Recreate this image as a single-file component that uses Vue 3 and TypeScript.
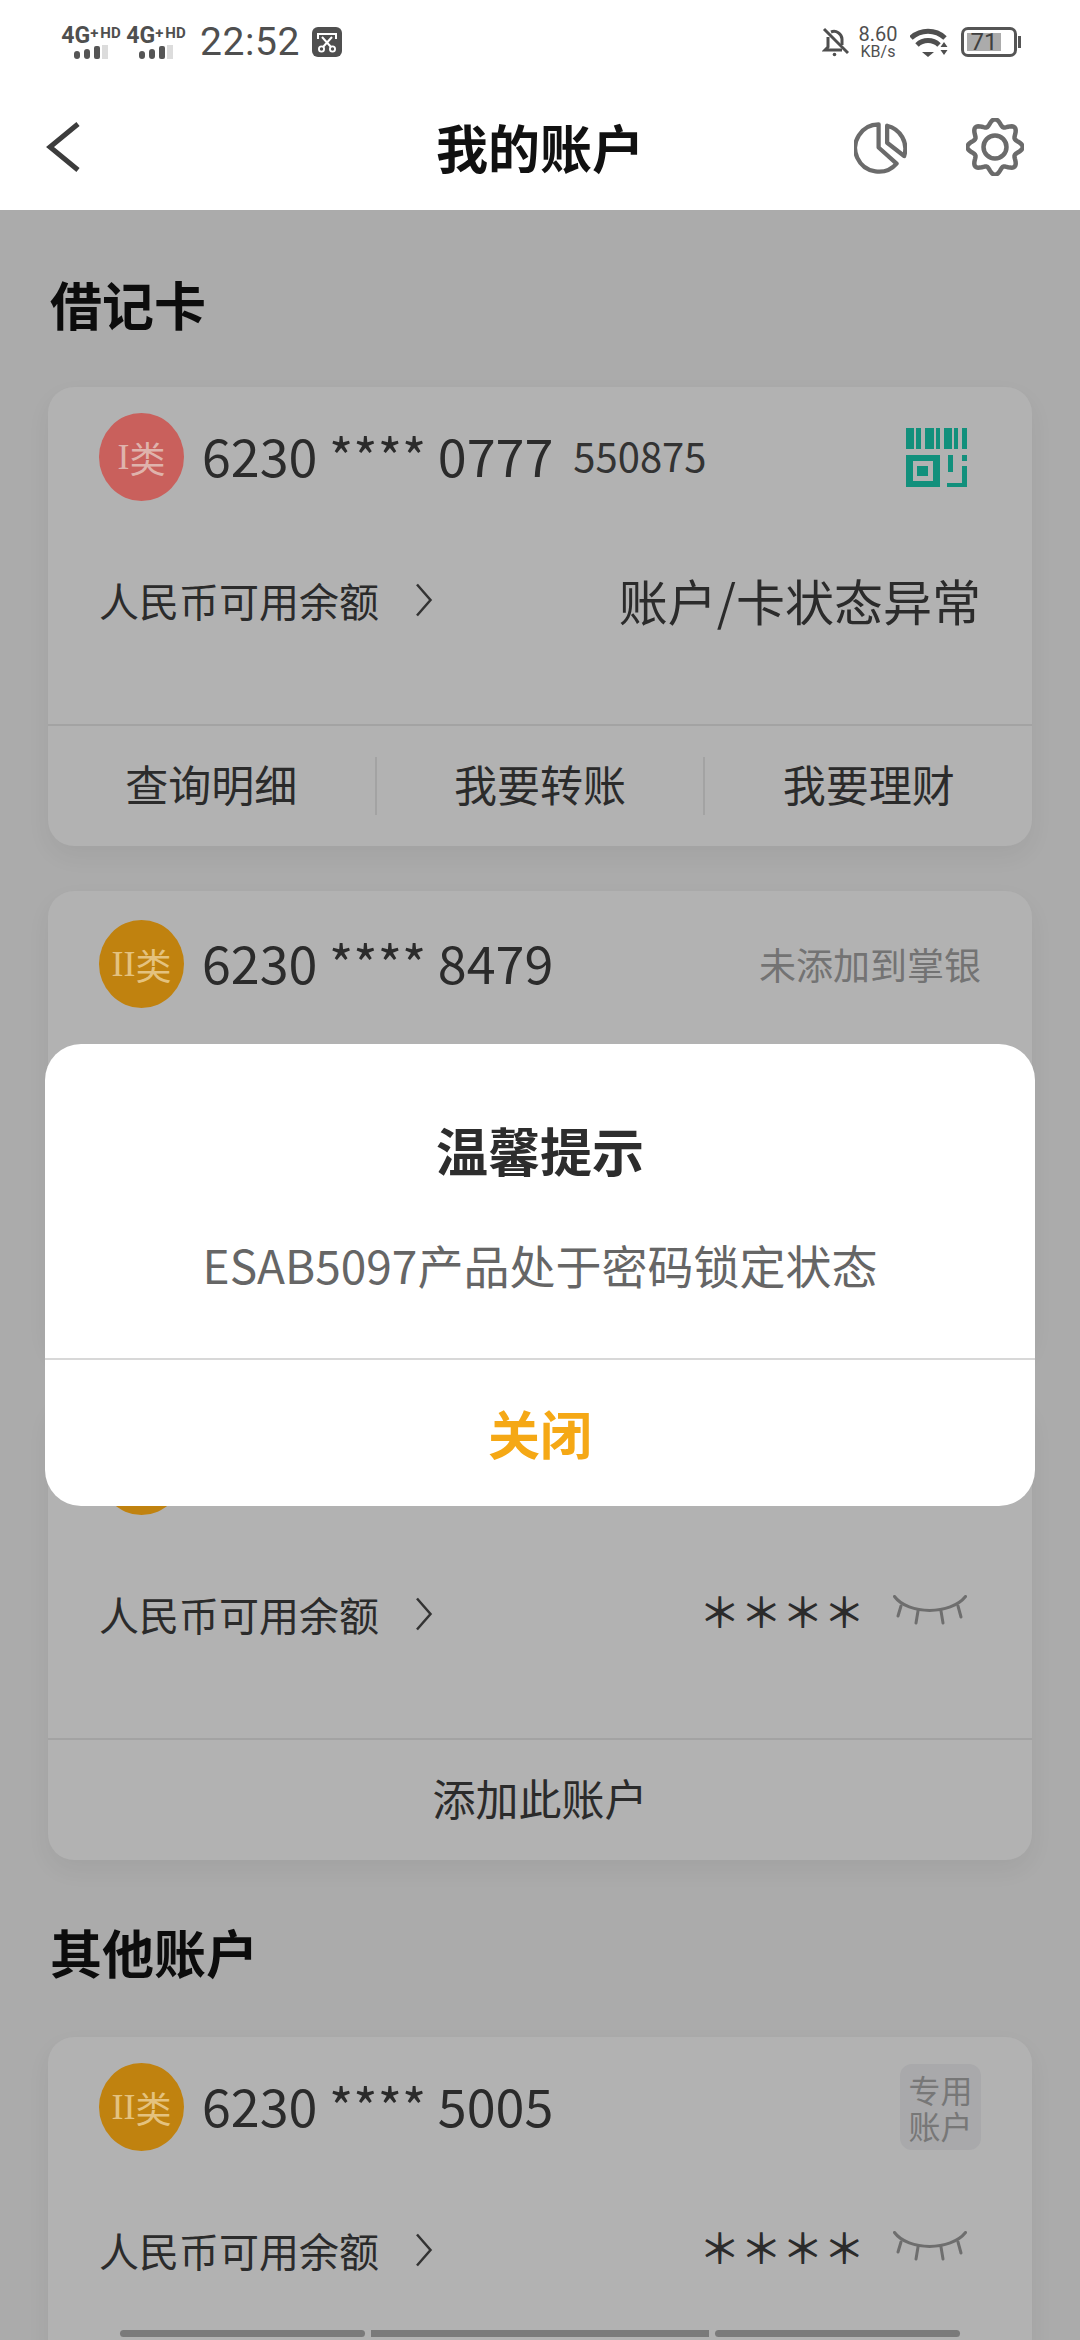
<template>
  <div class="page">
    <div class="status-bar">
      <div class="status-left">
        <div v-for="n in 2" :key="n" class="net">
          <div class="net-label">4G<sup>+</sup><span class="hd">HD</span></div>
          <svg class="net-bars" width="34" height="14" viewBox="0 0 34 14">
            <rect x="0" y="6" width="6" height="8" rx="3" fill="#555" />
            <rect x="10" y="4" width="6" height="10" rx="3" fill="#555" />
            <rect x="20" y="1" width="6" height="13" rx="2" fill="#555" />
            <rect x="28" y="0" width="6" height="14" fill="#dcdcdc" />
          </svg>
        </div>
        <span class="time">22:52</span>
        <svg class="cut-icon" width="30" height="30" viewBox="0 0 30 30">
          <rect width="30" height="30" rx="6" fill="#4f4f4f" />
          <path d="M6 12V7h18v5M10 10l9 10M20 10l-9 10" fill="none" stroke="#fff" stroke-width="2" />
          <circle cx="9.5" cy="22" r="2.6" fill="none" stroke="#fff" stroke-width="1.8" />
          <circle cx="20.5" cy="22" r="2.6" fill="none" stroke="#fff" stroke-width="1.8" />
        </svg>
      </div>
      <div class="status-right">
        <svg class="bell" width="27" height="30" viewBox="0 0 27 30" fill="none" stroke="#4f4f4f" stroke-width="3">
          <path d="M6 10v10l-3 3h17M9 5a8 8 0 0 1 11 7v6" />
          <path d="M2 2l24 24" />
          <circle cx="12.5" cy="27.5" r="1.8" fill="#4f4f4f" stroke="none" />
        </svg>
        <div class="speed">
          <span class="speed-num">8.60</span>
          <span class="speed-unit">KB/s</span>
        </div>
        <svg class="wifi" width="38" height="29" viewBox="0 0 38 29" fill="none" stroke="#4f4f4f" stroke-width="5">
          <path d="M1 10A25 25 0 0 1 35 10" />
          <path d="M7 17A16 16 0 0 1 29 17" />
          <path d="M12 24h12l-6 5z" fill="#4f4f4f" stroke="none" />
          <path d="M30.500 19h7l-3.500-5zM30.500 22h7l-3.500 5z" fill="#4f4f4f" stroke="none" />
        </svg>
        <div class="battery">
          <div class="battery-body">
            <div class="battery-fill">71</div>
          </div>
          <div class="battery-nib"></div>
        </div>
      </div>
    </div>

    <header class="nav">
      <svg class="back" width="34" height="50" viewBox="0 0 34 50" fill="none" stroke="#3c3c3c" stroke-width="5">
        <path d="M32 2L4 25l28 23" />
      </svg>
      <h1 class="nav-title">我的账户</h1>
      <div class="nav-actions">
        <svg width="53" height="53" viewBox="0 0 56 56" fill="none" stroke="#6b6b6b" stroke-width="4.500" stroke-linejoin="round">
          <path d="M26 3.500A25 25 0 1 0 45 45L26 28Z" />
          <path d="M35 5A25 25 0 0 1 53 37L35 23Z" />
        </svg>
        <svg width="58" height="58" viewBox="0 0 58 58" fill="none" stroke="#6b6b6b" stroke-width="4.500">
          <path :d="gearPath" />
          <circle cx="29" cy="29" r="11.500" />
        </svg>
      </div>
    </header>

    <main class="content">
      <section v-for="section in sections" :key="section.title" class="section">
        <h2 class="section-title">{{ section.title }}</h2>
        <div class="card-list">
          <div v-for="card in section.cards" :key="card.id" class="card" :class="{ tall: card.tall }">
            <div class="card-head">
              <span class="badge" :class="card.level === 'I' ? 'badge-red' : 'badge-gold'">
                <span class="badge-num">{{ card.level }}</span>类
              </span>
              <span v-if="card.no" class="card-no">{{ card.no }}</span>
              <span v-if="card.sub" class="card-sub">{{ card.sub }}</span>
              <svg v-if="card.tag === 'qr'" class="qr" width="61" height="59" viewBox="0 0 61 59" fill="#12907c">
                <path d="M0 0h8v21H0zM10 0h5v21h-5zM19 0h9v21h-9zM30 0h4v21h-4zM38 0h8v21h-8zM48 0h4v21h-4zM56 0h5v21h-5z" />
                <path fill-rule="evenodd" d="M0 27h34v32H0zM7 33v20h20V33z" />
                <path d="M11 38h11v10H11zM42 27h5v17h-5zM56 27h5v6h-5zM56 38h5v21H41v-4h15z" />
              </svg>
              <span v-else-if="card.tag === 'special'" class="tag-special">专用<br />账户</span>
              <span v-else-if="card.tag === 'unbound'" class="tag-unbound">未添加到掌银</span>
            </div>
            <div v-if="!card.covered" class="card-balance">
              <div class="balance-label">
                <span>人民币可用余额</span>
                <svg width="18" height="34" viewBox="0 0 18 34" fill="none" stroke="#333" stroke-width="2.500">
                  <path d="M2 1.500L15.500 17 2 32.500" />
                </svg>
              </div>
              <div v-if="card.status" class="balance-status">{{ card.status }}</div>
              <div v-else class="balance-hidden">
                <span class="stars">＊＊＊＊</span>
                <svg class="eye" width="74" height="30" viewBox="0 0 74 30" fill="none" stroke="#6e6e6e" stroke-width="3" stroke-linecap="round">
                  <path d="M1.500 1.500C15 20 58 20 72.500 1.500" />
                  <path d="M8 11L5 21M25 16l-2 12M48 16l2 12M65 11l3 11" />
                </svg>
              </div>
            </div>
            <div v-if="card.actions.length" class="card-actions">
              <div v-for="action in card.actions" :key="action" class="action">{{ action }}</div>
            </div>
          </div>
        </div>
      </section>
    </main>

    <div class="home-bar">
      <span class="home-seg seg-a"></span>
      <span class="home-seg seg-b"></span>
      <span class="home-seg seg-a"></span>
    </div>

    <div class="dialog">
      <div class="dialog-body">
        <h3 class="dialog-title">温馨提示</h3>
        <p class="dialog-msg">ESAB5097产品处于密码锁定状态</p>
      </div>
      <button class="dialog-btn">关闭</button>
    </div>
  </div>
</template>

<script setup lang="ts">
interface Card {
  id: number;
  level: 'I' | 'II';
  no?: string;
  sub?: string;
  tag?: 'qr' | 'special' | 'unbound';
  status?: string;
  tall?: boolean;
  covered?: boolean; // lower part sits behind the dialog
  actions: string[];
}

const sections: { title: string; cards: Card[] }[] = [
  {
    title: '借记卡',
    cards: [
      {
        id: 1,
        level: 'I',
        no: '6230 **** 0777',
        sub: '550875',
        tag: 'qr',
        status: '账户/卡状态异常',
        actions: ['查询明细', '我要转账', '我要理财']
      },
      { id: 2, level: 'II', no: '6230 **** 8479', tag: 'unbound', tall: true, covered: true, actions: [] },
      { id: 3, level: 'II', tall: true, actions: ['添加此账户'] }
    ]
  },
  {
    title: '其他账户',
    cards: [{ id: 4, level: 'II', no: '6230 **** 5005', tag: 'special', actions: [] }]
  }
];

// scalloped gear outline, 8 lobes
const gearPath = (() => {
  const pts: string[] = [];
  for (let i = 0; i < 120; i++) {
    const a = (i / 120) * Math.PI * 2;
    const r = 24.5 + 3.2 * Math.cos(8 * a);
    const x = 29 + r * Math.sin(a);
    const y = 29 - r * Math.cos(a);
    pts.push(`${x.toFixed(2)} ${y.toFixed(2)}`);
  }
  return `M${pts.join('L')}Z`;
})();
</script>

<style>
body {
  background: #ababab;
}
</style>

<style scoped>
.page {
  position: relative;
  width: 1080px;
  height: 2340px;
  overflow: hidden;
  background: #ababab;
  font-family: "Noto Sans CJK SC", "Noto Sans", sans-serif;
  color: #2b2b2b;
}

.status-bar {
  display: flex;
  align-items: center;
  justify-content: space-between;
  height: 84px;
  padding: 0 59px 0 62px;
  background: #fff;
  color: #4f4f4f;
  font-family: Roboto, sans-serif;
}

.status-left,
.status-right {
  display: flex;
  align-items: center;
}

.net {
  display: flex;
  flex-direction: column;
  align-items: center;
  width: 58px;
  margin-right: 7px;
  padding-top: 1px;
}

.net-label {
  display: flex;
  align-items: flex-start;
  font-size: 23px;
  line-height: 17px;
  font-weight: 700;
  white-space: nowrap;
}

.net-label sup {
  font-size: 15px;
  line-height: 13px;
}

.hd {
  margin-left: 2px;
  font-size: 15px;
  line-height: 13px;
}

.net-bars {
  display: block;
  margin-top: 1px;
}

.time {
  margin-left: 8px;
  font-size: 39px;
  line-height: 44px;
  letter-spacing: 0.6px;
}

.cut-icon {
  margin-left: 12px;
}

.bell {
  margin-right: 10px;
}

.speed {
  display: flex;
  flex-direction: column;
  align-items: center;
  width: 38px;
  margin-right: 13px;
}

.speed-num {
  font-size: 20px;
  line-height: 19px;
}

.speed-unit {
  font-size: 16px;
  line-height: 15px;
}

.wifi {
  margin-right: 13px;
}

.battery {
  display: flex;
  align-items: center;
}

.battery-body {
  width: 56px;
  height: 30px;
  padding: 3px;
  box-sizing: border-box;
  border: 3px solid #555;
  border-radius: 7px;
}

.battery-fill {
  width: 34px;
  height: 100%;
  background: #ababab;
  text-align: center;
  font-size: 24px;
  line-height: 19px;
  color: #3f3f3f;
  white-space: nowrap;
}

.battery-nib {
  width: 3px;
  height: 12px;
  margin-left: 1px;
  background: #555;
}

.nav {
  display: grid;
  grid-template-columns: 1fr auto 1fr;
  align-items: center;
  height: 126px;
  padding: 0 46px;
  background: #fff;
}

.nav-title {
  margin: 0;
  font-size: 52px;
  line-height: 60px;
  font-weight: 700;
  color: #111;
}

.nav-actions {
  display: flex;
  align-items: center;
  justify-content: flex-end;
  gap: 59px;
  padding-right: 10px;
}

.content {
  padding: 64px 48px 0;
}

.section + .section {
  margin-top: 62px;
}

.section-title {
  margin: 0 0 53px 2px;
  font-size: 52px;
  line-height: 60px;
  font-weight: 700;
  color: #0c0c0c;
}

.section + .section .section-title {
  margin-bottom: 55px;
}

.card-list {
  display: flex;
  flex-direction: column;
  gap: 45px;
}

.card {
  min-height: 459px;
  background: #b2b2b2;
  border-radius: 26px;
  box-shadow: 0 10px 24px rgba(0, 0, 0, 0.05);
}

.card.tall {
  min-height: 462px;
}

.card-head {
  display: flex;
  align-items: center;
  height: 88px;
  padding: 26px 51px 0;
  box-sizing: content-box;
}

.card.tall .card-head {
  padding-top: 29px;
}

.badge {
  display: flex;
  align-items: center;
  justify-content: center;
  width: 85px;
  height: 88px;
  margin-right: 18px;
  border-radius: 50%;
  font-size: 36px;
  line-height: 1;
}

.badge-num {
  font-family: "Liberation Serif", serif;
}

.badge-red {
  background: #c9605c;
  color: #dfb3ac;
}

.badge-gold {
  background: #c0820f;
  color: #e4c27f;
}

.card-no {
  margin-bottom: 4px;
  font-size: 52px;
  line-height: 84px;
  color: #2b2b2b;
  white-space: pre;
}

.card-sub {
  margin-bottom: 4px;
  margin-left: 20px;
  font-size: 40px;
  line-height: 84px;
  color: #333;
}

.qr {
  margin-left: auto;
  margin-right: 14px;
}

.tag-special {
  display: block;
  margin-left: auto;
  padding: 7px 4px 0;
  width: 81px;
  height: 86px;
  box-sizing: border-box;
  border-radius: 12px;
  background: #a9a9ab;
  text-align: center;
  font-size: 32px;
  line-height: 36px;
  color: #777;
}

.tag-unbound {
  margin-left: auto;
  font-size: 37px;
  line-height: 88px;
  color: #737373;
}

.card-balance {
  display: flex;
  align-items: center;
  justify-content: space-between;
  height: 60px;
  margin-top: 69px;
  padding: 0 51px;
}

.balance-label {
  display: flex;
  align-items: center;
  gap: 36px;
  font-size: 40px;
  line-height: 60px;
  color: #2b2b2b;
}

.balance-status {
  font-size: 49px;
  line-height: 60px;
  color: #2b2b2b;
}

.balance-hidden {
  display: flex;
  align-items: center;
  margin-top: -8px;
}

.stars {
  font-size: 41.5px;
  line-height: 60px;
  font-weight: 500;
  color: #2b2b2b;
}

.eye {
  margin-left: 28px;
  margin-right: 14px;
}

.card-actions {
  display: flex;
  align-items: center;
  height: 120px;
  margin-top: 94px;
  border-top: 2px solid #a3a3a3;
}

.action {
  flex: 1;
  padding-bottom: 6px;
  text-align: center;
  font-size: 43px;
  line-height: 52px;
  color: #2b2b2b;
}

.action + .action {
  border-left: 2px solid #a3a3a3;
}

.home-bar {
  position: absolute;
  left: 120px;
  bottom: 3px;
  display: flex;
  gap: 6px;
  width: 840px;
}

.home-seg {
  height: 7px;
  background: #7a7a7a;
}

.seg-a {
  width: 245px;
  border-radius: 4px;
}

.seg-b {
  width: 338px;
}

.dialog {
  position: absolute;
  left: 45px;
  top: 1044px;
  display: flex;
  flex-direction: column;
  width: 990px;
  height: 462px;
  background: #fff;
  border-radius: 36px;
  overflow: hidden;
}

.dialog-body {
  height: 316px;
  padding-top: 76px;
  box-sizing: border-box;
  border-bottom: 2px solid #d8d8d8;
  text-align: center;
}

.dialog-title {
  margin: 0;
  font-size: 52px;
  line-height: 60px;
  font-weight: 700;
  color: #2d2d2d;
}

.dialog-msg {
  margin: 54px 0 0;
  font-size: 46px;
  line-height: 60px;
  color: #666;
}

.dialog-btn {
  flex: 1;
  padding: 0 0 2px;
  border: none;
  background: none;
  font-family: inherit;
  font-size: 52px;
  font-weight: 700;
  color: #f5a815;
}
</style>
